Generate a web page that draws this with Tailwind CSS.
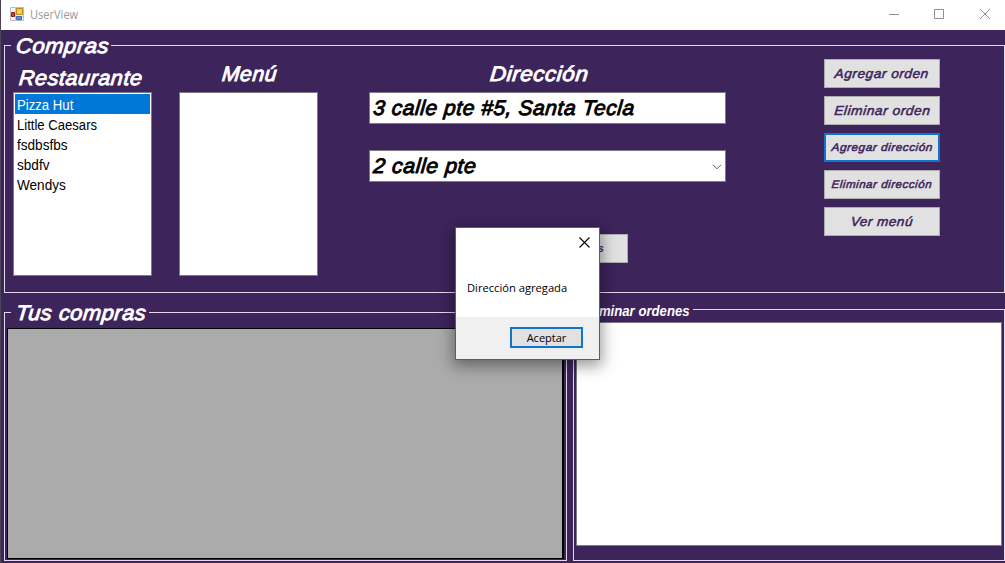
<!DOCTYPE html>
<html lang="es">
<head>
<meta charset="utf-8">
<title>UserView</title>
<script src="https://cdn.jsdelivr.net/npm/@tailwindcss/browser@4"></script>
</head>
<body class="w-[1005px] h-[563px] overflow-hidden bg-[#3d245b] font-['Liberation_Sans',sans-serif]">
<div class="relative flex flex-col w-full h-full border-l border-[#4c4457]">
  <header class="flex items-center h-[30px] shrink-0 bg-white pl-[9px]">
    <svg class="w-[14px] h-[14px] shrink-0 -mt-[2px]" viewBox="0 0 14 14">
      <path d="M.5 .5h13v13H.5z" fill="#f4f4f6" stroke="#b9bbc4"/>
      <path d="M5.500 0v14M0 9.500h14" stroke="#c3c5cc"/>
      <path d="M6.500 1.500h6v6h-6z" fill="#f6cf4b" stroke="#b98a17"/>
      <path d="M1.500 5.500h3v4h-3z" fill="#d8412f" stroke="#8f1d16"/>
      <path d="M6.500 9.500h5v3h-5z" fill="#5c8fe6" stroke="#3f68bb"/>
    </svg>
    <h1 class="ml-[6px] font-['Open_Sans',sans-serif] text-[12px] leading-none text-[#9a9a9a]"><span class="inline-block origin-left scale-x-[.92]">UserView</span></h1>
    <svg class="ml-auto mr-[14px] w-[102px] h-[12px] shrink-0 -mt-[2px]" viewBox="0 0 102 12" fill="none" stroke="#8f8f8f">
      <path d="M0 6.500h10M45.500 1.500h9v9h-9z"/>
      <path d="M91 1l10 10M101 1L91 11"/>
    </svg>
  </header>

  <main class="flex flex-col pt-[15px] pl-[3px]">
    <section class="relative flex w-[1001px] h-[248px] border border-[#e4d9ec] pl-[8px]">
      <h2 class="absolute left-[6px] -top-[12px] w-[100px] h-[24px] bg-[#3d245b] pl-[4px] text-[21px] leading-[24px] tracking-[.5px] [-webkit-text-stroke:.9px] italic text-white whitespace-nowrap"><span class="inline-block origin-bottom-left scale-x-[1.05] -skew-x-[5deg]">Compras</span></h2>

      <div class="w-[139px]">
        <h3 class="h-[46px] pt-[20px] pl-[5px] text-[21px] leading-[24px] tracking-[.5px] [-webkit-text-stroke:.9px] italic text-white whitespace-nowrap"><span class="inline-block origin-bottom-left scale-x-[1.03] -skew-x-[5deg]">Restaurante</span></h3>
        <ul class="h-[184px] bg-white border border-[#7c7a82] p-px text-[14px] leading-[22px] text-black">
          <li class="h-[20px] bg-[#0078d7] text-white pl-[2px]"><span class="inline-block origin-left scale-x-[.94]">Pizza Hut</span></li>
          <li class="h-[20px] pl-[2px]"><span class="inline-block origin-left scale-x-[.935]">Little Caesars</span></li>
          <li class="h-[20px] pl-[2px]"><span class="inline-block origin-left scale-x-[.97]">fsdbsfbs</span></li>
          <li class="h-[20px] pl-[2px]"><span class="inline-block origin-left scale-x-[.97]">sbdfv</span></li>
          <li class="h-[20px] pl-[2px]"><span class="inline-block origin-left scale-x-[.97]">Wendys</span></li>
        </ul>
      </div>

      <div class="w-[139px] ml-[27px]">
        <h3 class="h-[46px] pt-[16px] pl-[42px] text-[21px] leading-[24px] tracking-[.5px] [-webkit-text-stroke:.9px] italic text-white whitespace-nowrap"><span class="inline-block origin-bottom-left scale-x-[1.01] -skew-x-[5deg]">Menú</span></h3>
        <div class="h-[184px] bg-white border border-[#7c7a82]"></div>
      </div>

      <div class="w-[357px] ml-[51px]">
        <h3 class="h-[46px] pt-[16px] pl-[120px] text-[21px] leading-[24px] tracking-[.5px] [-webkit-text-stroke:.9px] italic text-white whitespace-nowrap"><span class="inline-block origin-bottom-left scale-x-[1.07] -skew-x-[5deg]">Dirección</span></h3>
        <div class="h-[32px] bg-white border border-[#7c7a82] pl-[2px] text-[21px] leading-[30px] tracking-[.5px] [-webkit-text-stroke:.9px] italic text-black whitespace-nowrap"><span class="inline-block origin-bottom-left scale-x-[1.005] -skew-x-[5deg]">3 calle pte #5, Santa Tecla</span></div>
        <div class="flex items-center justify-between h-[32px] mt-[26px] bg-white border border-[#7c7a82] pl-[2px] pr-[3px] text-[21px] leading-[30px] tracking-[.5px] [-webkit-text-stroke:.9px] italic text-black whitespace-nowrap">
          <span class="inline-block origin-bottom-left scale-x-[1.02] -skew-x-[5deg]">2 calle pte</span>
          <svg class="w-[10px] h-[6px] mt-[2px]" viewBox="0 0 10 6" fill="none" stroke="#555"><path d="M1 .8l4 4 4-4"/></svg>
        </div>
        <div class="flex items-center justify-end w-[116px] h-[29px] mt-[52px] ml-[143px] pr-[23px] bg-[#e1e1e1] border border-[#adadad] text-[11px] font-bold italic text-[#3d245b]">Ver ordenes</div>
      </div>

      <div class="flex flex-col gap-[8px] w-[116px] ml-[98px] pt-[13px] italic tracking-[.5px] [-webkit-text-stroke:.5px] text-[#3d245b] whitespace-nowrap">
        <button class="h-[29px] bg-[#e1e1e1] border border-[#adadad] text-[13px]"><span class="inline-block scale-x-[1.05] -skew-x-[5deg]">Agregar orden</span></button>
        <button class="h-[29px] bg-[#e1e1e1] border border-[#adadad] text-[13px]"><span class="inline-block scale-x-[1.06] -skew-x-[5deg]">Eliminar orden</span></button>
        <button class="h-[29px] bg-[#e1e1e1] border-2 border-[#0f74cc] text-[11px]"><span class="inline-block scale-x-[1.07] -skew-x-[5deg]">Agregar dirección</span></button>
        <button class="h-[29px] bg-[#e1e1e1] border border-[#adadad] text-[11px]"><span class="inline-block scale-x-[1.05] -skew-x-[5deg]">Eliminar dirección</span></button>
        <button class="h-[29px] bg-[#e1e1e1] border border-[#adadad] text-[13px]"><span class="inline-block scale-x-[1.04] -skew-x-[5deg]">Ver menú</span></button>
      </div>
    </section>

    <div class="flex items-end gap-[6px] mt-[16px]">
      <section class="relative w-[563px] h-[249px] border border-[#e4d9ec] pt-[15px] pl-[2px] pr-[2px]">
        <h2 class="absolute left-[6px] -top-[12px] w-[138px] h-[24px] bg-[#3d245b] pl-[4px] text-[21px] leading-[24px] tracking-[.5px] [-webkit-text-stroke:.9px] italic text-white whitespace-nowrap"><span class="inline-block origin-bottom-left scale-x-[1.04] -skew-x-[5deg]">Tus compras</span></h2>
        <div class="relative h-[231px] bg-[#ababab] border border-black border-r-2"></div>
      </section>
      <section class="relative w-[432px] h-[252px] border border-[#e4d9ec] pt-[12px] pl-[2px] pr-[2px]">
        <h2 class="absolute left-[6px] -top-[7px] flex justify-end w-[113px] h-[15px] bg-[#3d245b] pr-[3px] text-[14px] leading-[17px] font-bold italic text-white whitespace-nowrap"><span class="inline-block origin-right scale-x-[.94]">Eliminar ordenes</span></h2>
        <div class="relative h-[224px] bg-white border border-[#7c7a82]"></div>
      </section>
    </div>
  </main>

  <div role="dialog" class="absolute left-[454px] top-[227px] flex flex-col w-[145px] h-[133px] border border-[#5f5a68] bg-white shadow-[0_4px_14px_2px_rgba(0,0,0,0.4)] font-['Open_Sans',sans-serif] text-[11px] text-black">
    <div class="flex justify-end h-[28px] pt-[9px] pr-[9px]">
      <svg class="w-[11px] h-[11px]" viewBox="0 0 11 11" fill="none" stroke="#000" stroke-width="1.100"><path d="M.5 .5l10 10M10.500 .5l-10 10"/></svg>
    </div>
    <p class="flex-1 pl-[11px] pt-[24px] leading-[16px] whitespace-nowrap"><span class="inline-block origin-left scale-x-[1.015]">Dirección agregada</span></p>
    <footer class="flex justify-end items-start h-[42px] bg-[#f0f0f0] pt-[10px] pr-[16px]">
      <button class="w-[73px] h-[21px] bg-[#e1e1e1] border-2 border-[#0f74cc] leading-[17px]">Aceptar</button>
    </footer>
  </div>
</div>
</body>
</html>
